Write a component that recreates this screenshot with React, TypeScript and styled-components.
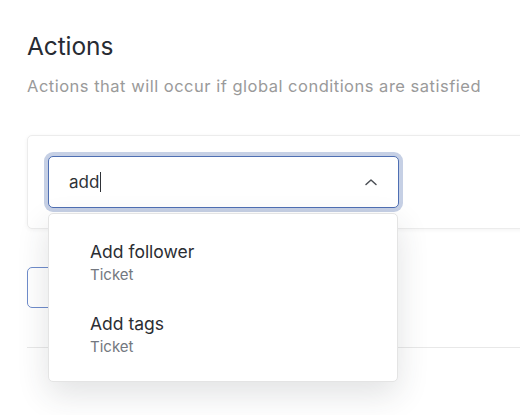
import React from 'react';
import styled, { createGlobalStyle } from 'styled-components';

const GlobalStyle = createGlobalStyle`
  html, body {
    margin: 0;
    padding: 0;
    background: #fff;
    font-family: Inter, "Noto Sans", sans-serif;
    -webkit-font-smoothing: antialiased;
  }
`;

const Page = styled.div`
  padding: 32px 0 0 27px;
  overflow: hidden;
  height: 415px;
  box-sizing: border-box;
`;

const Title = styled.h2`
  margin: 0;
  font-size: 24.5px;
  font-weight: 400;
  line-height: 29px;
  color: #272b33;
  letter-spacing: -0.1px;
`;

const Subtitle = styled.p`
  margin: 15px 0 0;
  font-size: 16.5px;
  line-height: 20px;
  letter-spacing: 0.5px;
  color: #9a9a9a;
`;

const Card = styled.div`
  margin-top: 39px;
  width: 600px;
  padding: 20px;
  background: #fff;
  border: 1px solid #ececec;
  border-radius: 5px;
  box-shadow: 0 1px 4px rgba(0, 0, 0, 0.05);
`;

const SelectWrap = styled.div`
  position: relative;
  width: 351px;
`;

const SelectBox = styled.div`
  height: 52px;
  box-sizing: border-box;
  display: flex;
  align-items: center;
  justify-content: space-between;
  padding: 0 20px;
  border: 1px solid #4f6fb3;
  border-radius: 5px;
  box-shadow: 0 0 0 4px #c6d0e5;
  background: #fff;
`;

const Query = styled.span`
  font-size: 17px;
  color: #2f3237;
  display: flex;
  align-items: center;
`;

const Caret = styled.span`
  display: inline-block;
  width: 1px;
  height: 20px;
  margin-left: 1px;
  background: #2f3237;
`;

const Menu = styled.div`
  position: absolute;
  top: 57px;
  left: 0;
  width: 350px;
  box-sizing: border-box;
  padding: 23px 0 0;
  background: #fff;
  border: 1px solid #e4e4e4;
  border-radius: 5px;
  box-shadow: 0 12px 32px rgba(40, 50, 60, 0.14);
  z-index: 2;
`;

const Option = styled.div`
  height: 72px;
  box-sizing: border-box;
  padding: 4px 0 0 41px;
`;

const OptionLabel = styled.div`
  font-size: 17.5px;
  line-height: 22px;
  color: #2b2e33;
`;

const OptionSub = styled.div`
  margin-top: 1px;
  font-size: 15px;
  line-height: 22px;
  color: #737880;
`;

const AddButton = styled.button`
  margin-top: 38px;
  width: 200px;
  height: 41px;
  background: #fff;
  border: 1px solid #6f8ccb;
  border-radius: 5px;
`;

const Divider = styled.hr`
  margin: 37px 0 0;
  border: none;
  border-top: 1px solid #e8e8e8;
  width: 600px;
`;

const ChevronUp = () => (
  <svg width="14" height="10" viewBox="0 0 14 10" fill="none">
    <path d="M2 7.5 L7 3 L12 7.5" stroke="#4b4f55" strokeWidth="1.5" strokeLinecap="round" strokeLinejoin="round" />
  </svg>
);

const options = [
  { label: 'Add follower', sub: 'Ticket' },
  { label: 'Add tags', sub: 'Ticket' },
];

export default function App() {
  return (
    <>
      <GlobalStyle />
      <Page>
        <Title>Actions</Title>
        <Subtitle>Actions that will occur if global conditions are satisfied</Subtitle>
        <Card>
          <SelectWrap>
            <SelectBox>
              <Query>
                add
                <Caret />
              </Query>
              <ChevronUp />
            </SelectBox>
            <Menu>
              {options.map((o) => (
                <Option key={o.label}>
                  <OptionLabel>{o.label}</OptionLabel>
                  <OptionSub>{o.sub}</OptionSub>
                </Option>
              ))}
            </Menu>
          </SelectWrap>
        </Card>
        <AddButton />
        <Divider />
      </Page>
    </>
  );
}
